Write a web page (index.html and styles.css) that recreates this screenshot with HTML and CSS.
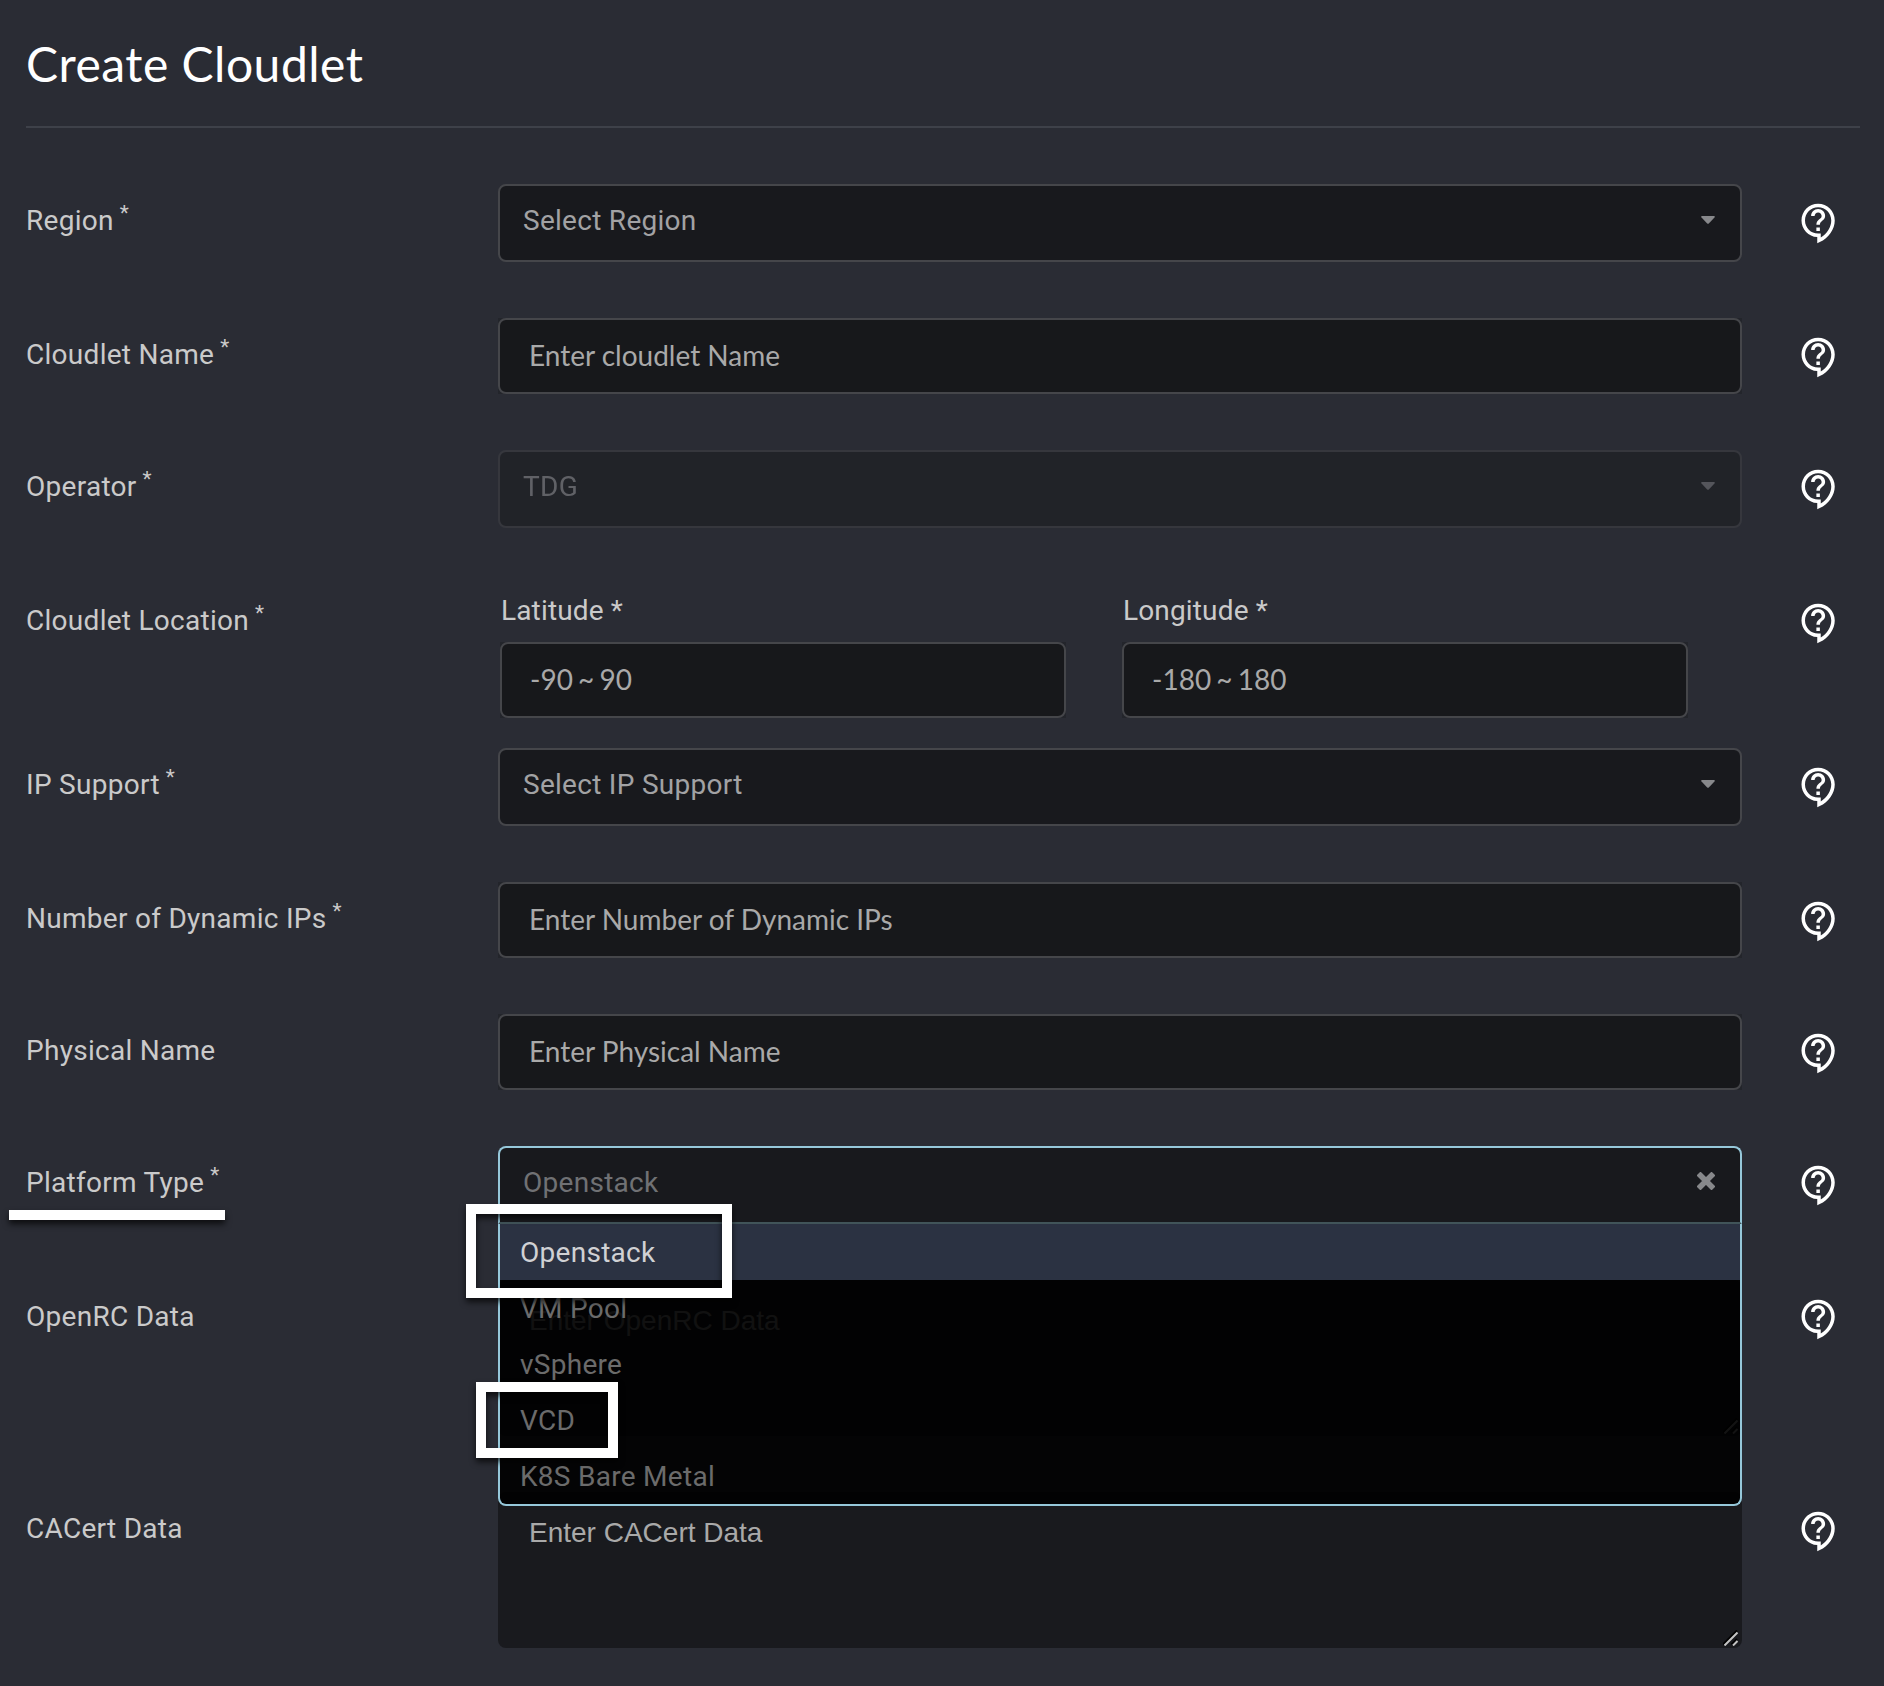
FILE: index.html
```html
<!DOCTYPE html>
<html lang="en">
<head>
<meta charset="utf-8">
<title>Create Cloudlet</title>
<link rel="stylesheet" href="styles.css">
</head>
<body>
<svg class="sprite" aria-hidden="true">
  <symbol id="help" viewBox="0 0 24 24"><path d="M11 23.59v-3.6c-5.01-.26-9-4.42-9-9.49C2 5.26 6.26 1 11.5 1S21 5.26 21 10.5c0 4.95-3.44 9.93-8.57 12.4l-1.43.69zM11.5 3C7.36 3 4 6.36 4 10.5S7.36 18 11.5 18H13v2.3c3.64-2.3 6-6.08 6-9.8C19 6.36 15.64 3 11.5 3zm-1 11.5h2v2h-2zm2-1.5h-2c0-3.25 3-3 3-5 0-1.1-.9-2-2-2s-2 .9-2 2h-2c0-2.21 1.79-4 4-4s4 1.79 4 4c0 2.5-3 2.75-3 5z"/></symbol>
  <symbol id="caret" viewBox="0 0 14 8"><path d="M.8 0h12.400q1 .5.3 1.400L7.800 7.500q-.8.7-1.600 0L.5 1.400Q-.2.5.8 0z"/></symbol>
  <symbol id="cross" viewBox="0 0 18 18"><path d="M3.500 3.500l11 11M14.500 3.500l-11 11" fill="none" stroke="currentColor" stroke-width="5.600" stroke-linecap="square" stroke-linejoin="round"/></symbol>
  <symbol id="grip" viewBox="0 0 16 16"><path d="M0 14.500L14 .5M8.500 14.500L14 9" fill="none" stroke="#000" stroke-width="2"/><path d="M1.500 15.500L14.500 2.500M10 15.500l4.500-4.500" fill="none" stroke="currentColor" stroke-width="2"/></symbol>
</svg>
<main class="page">
  <h1 class="title">Create Cloudlet</h1>
  <form class="form">
    <div class="row">
      <label class="label">Region<sup class="req">*</sup></label>
      <div class="select"><span>Select Region</span><svg class="caret"><use href="#caret"/></svg></div>
      <svg class="help"><use href="#help"/></svg>
    </div>
    <div class="row">
      <label class="label">Cloudlet Name<sup class="req">*</sup></label>
      <div class="field"><div class="input">Enter cloudlet Name</div></div>
      <svg class="help"><use href="#help"/></svg>
    </div>
    <div class="row">
      <label class="label">Operator<sup class="req">*</sup></label>
      <div class="select disabled"><span>TDG</span><svg class="caret"><use href="#caret"/></svg></div>
      <svg class="help"><use href="#help"/></svg>
    </div>
    <div class="row location">
      <label class="label">Cloudlet Location<sup class="req">*</sup></label>
      <div class="pair">
        <div class="coord"><span class="coord-label">Latitude *</span><div class="field"><div class="input">-90 ~ 90</div></div></div>
        <div class="coord"><span class="coord-label">Longitude *</span><div class="field"><div class="input">-180 ~ 180</div></div></div>
      </div>
      <svg class="help"><use href="#help"/></svg>
    </div>
    <div class="row">
      <label class="label">IP Support<sup class="req">*</sup></label>
      <div class="select"><span>Select IP Support</span><svg class="caret"><use href="#caret"/></svg></div>
      <svg class="help"><use href="#help"/></svg>
    </div>
    <div class="row">
      <label class="label">Number of Dynamic IPs<sup class="req">*</sup></label>
      <div class="field"><div class="input">Enter Number of Dynamic IPs</div></div>
      <svg class="help"><use href="#help"/></svg>
    </div>
    <div class="row">
      <label class="label">Physical Name</label>
      <div class="field"><div class="input">Enter Physical Name</div></div>
      <svg class="help"><use href="#help"/></svg>
    </div>
    <div class="row">
      <label class="label">Platform Type<sup class="req">*</sup><i class="mark mark-line"></i></label>
      <div class="select open"><span>Openstack</span><svg class="cross"><use href="#cross"/></svg>
        <div class="menu">
          <div class="option selected">Openstack</div>
          <div class="option">VM Pool</div>
          <div class="option">vSphere</div>
          <div class="option">VCD</div>
          <div class="option">K8S Bare Metal</div>
        </div>
        <i class="mark mark-box mark-openstack"></i>
        <i class="mark mark-box mark-vcd"></i>
      </div>
      <svg class="help"><use href="#help"/></svg>
    </div>
    <div class="row">
      <label class="label">OpenRC Data</label>
      <div class="textarea">Enter OpenRC Data<svg class="grip"><use href="#grip"/></svg></div>
      <svg class="help"><use href="#help"/></svg>
    </div>
    <div class="row">
      <label class="label">CACert Data</label>
      <div class="textarea">Enter CACert Data<svg class="grip"><use href="#grip"/></svg></div>
      <svg class="help"><use href="#help"/></svg>
    </div>
  </form>
</main>
</body>
</html>
```

FILE: styles.css
```css
* { box-sizing: border-box; }
body {
  margin: 0;
  background: #2a2c34;
  color: #cacaca;
  font: 28px/40px Roboto, "Liberation Sans", sans-serif;
  letter-spacing: 0.28px;
}
.sprite { display: none; }
.page { height: 1686px; padding: 0 24px 0 26px; overflow: hidden; }
.title {
  height: 128px;
  margin: 0 0 56px;
  padding-top: 34px;
  border-bottom: 2px solid #3e4149;
  color: #fff;
  font: 400 48px/60px Lato, sans-serif;
  letter-spacing: 0.5px;
}
.form { display: flex; flex-direction: column; gap: 56px; }
.row {
  display: grid;
  grid-template-columns: 472px 1244px 42px;
  align-items: start;
}
.row.location { margin-bottom: -26px; }
.label { position: relative; padding-top: 17px; height: 57px; white-space: nowrap; }
.req { margin-left: 6px; font-size: 21px; line-height: 0; vertical-align: 10px; }
.help { width: 42px; height: 42px; margin: 18px 0 0 56px; fill: #fff; }

.select {
  position: relative;
  display: flex;
  justify-content: space-between;
  height: 78px;
  padding: 15px 25px 0 23px;
  border: 2px solid #45464a;
  border-radius: 8px;
  background: #18191d;
  color: #a2a2a4;
}
.select.disabled { opacity: 0.45; background: #18191b; }
.caret { width: 14px; height: 8px; margin-top: 15px; fill: #87888b; }
.cross { width: 18px; height: 18px; margin: 9px 0 0 0; color: #87888b; }
.select.open {
  border-color: #96c8da;
  border-bottom-color: #415459;
  border-radius: 8px 8px 0 0;
  color: #707174;
}

.field { background: #23252b; }
.input {
  height: 76px;
  padding: 15px 0 0 29px;
  border: 2px solid #45464a;
  border-radius: 8px;
  background: #17181b;
  color: #a9a9a9;
  font-family: Lato, sans-serif;
  letter-spacing: 0;
}
.pair {
  display: grid;
  grid-template-columns: 566px 566px;
  gap: 56px;
  padding-left: 2px;
}
.coord-label { display: block; height: 58px; padding: 7px 0 0 1px; letter-spacing: 0.15px; }
.coord .input { padding-left: 28px; word-spacing: -2px; }

.textarea {
  position: relative;
  height: 156px;
  padding: 21px 31px;
  border-radius: 8px;
  background: #191a1e;
  color: #a9a9a9;
  font-family: "Liberation Sans", sans-serif;
  letter-spacing: 0;
}
.grip { position: absolute; right: 3px; bottom: 2px; width: 16px; height: 16px; color: #c4c4c4; }

/* Dropdown list, laid over the fields below it */
.menu {
  position: absolute;
  z-index: 2;
  top: 76px;
  left: -2px;
  right: -2px;
  height: 282px;
  border: 2px solid #96c8da;
  border-top: 0;
  border-radius: 0 0 8px 8px;
  background: rgba(0, 0, 0, 0.9);
  background-clip: padding-box;
}
.option { height: 56px; padding: 9px 0 0 20px; color: #6b6b6b; }
.option.selected { background: #2b3242; color: #d0d1d4; }

/* White call-outs drawn over the form */
.mark { position: absolute; z-index: 3; filter: drop-shadow(0 4px 3px rgba(0, 0, 0, 0.7)); }
.mark-line { left: -17px; top: 64px; width: 216px; height: 10px; background: #fff; }
.mark-box { border: 10px solid #fff; }
.mark-openstack { left: -34px; top: 56px; width: 266px; height: 94px; }
.mark-vcd { left: -24px; top: 234px; width: 142px; height: 76px; }
```
